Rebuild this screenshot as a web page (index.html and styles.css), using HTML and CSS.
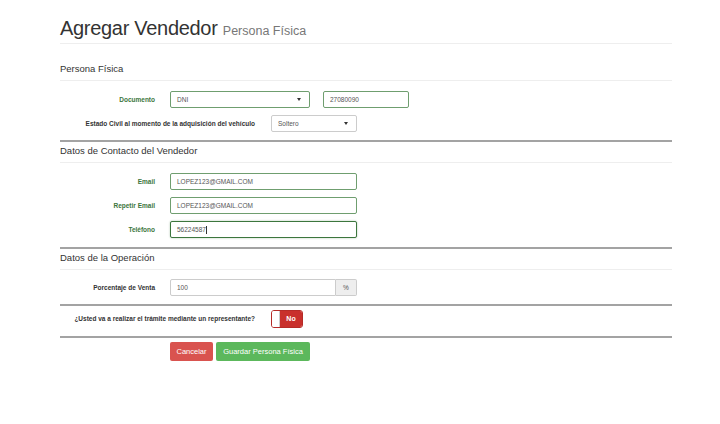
FILE: index.html
```html
<!DOCTYPE html>
<html lang="es">
<head>
<meta charset="utf-8">
<title>Agregar Vendedor</title>
<link rel="stylesheet" href="styles.css">
</head>
<body>
<div class="page">
  <div class="page-header">
    <h1>Agregar Vendedor <small>Persona Física</small></h1>
  </div>

  <section class="section first">
    <h2>Persona Física</h2>
    <div class="rows">
      <div class="row">
        <label class="lbl ok col-lbl">Documento</label>
        <div class="ctrl ok select w140">DNI</div>
        <div class="ctrl ok w86 ml13">27080090</div>
      </div>
      <div class="row">
        <label class="lbl col-lbl-wide">Estado Civil al momento de la adquisición del vehículo</label>
        <div class="ctrl select w86">Soltero</div>
      </div>
    </div>
  </section>

  <section class="section contact">
    <h2>Datos de Contacto del Vendedor</h2>
    <div class="rows">
      <div class="row">
        <label class="lbl ok col-lbl">Email</label>
        <div class="ctrl ok w187">LOPEZ123@GMAIL.COM</div>
      </div>
      <div class="row">
        <label class="lbl ok col-lbl">Repetir Email</label>
        <div class="ctrl ok w187">LOPEZ123@GMAIL.COM</div>
      </div>
      <div class="row">
        <label class="lbl ok col-lbl">Teléfono</label>
        <div class="ctrl focus w187">56224587<span class="caret"></span></div>
      </div>
    </div>
  </section>

  <section class="section operation">
    <h2>Datos de la Operación</h2>
    <div class="rows">
      <div class="row">
        <label class="lbl col-lbl">Porcentaje de Venta</label>
        <div class="group w187">
          <div class="ctrl grow">100</div>
          <div class="addon">%</div>
        </div>
      </div>
    </div>
  </section>

  <section class="section question">
    <div class="row">
      <label class="lbl col-lbl-wide">¿Usted va a realizar el trámite mediante un representante?</label>
      <div class="toggle"><span class="knob"></span><span class="off">No</span></div>
    </div>
  </section>

  <section class="section actions">
    <div class="btns">
      <button class="btn danger w43">Cancelar</button>
      <button class="btn success w94">Guardar Persona Física</button>
    </div>
  </section>
</div>
</body>
</html>
```

FILE: styles.css
```css
* { box-sizing: border-box; }

body {
  margin: 0;
  background: #fff;
  color: #333;
  font-family: "Liberation Sans", Arial, sans-serif;
}

.page {
  width: 612px;
  margin-left: 60px;
}

.page-header {
  padding-top: 16px;
  padding-bottom: 3px;
  border-bottom: 1px solid #eee;
}

h1 {
  margin: 0;
  height: 24px;
  font-size: 20px;
  line-height: 24px;
  font-weight: normal;
  letter-spacing: -0.3px;
  color: #333;
}

h1 small {
  font-size: 12.5px;
  line-height: 1;
  color: #777;
  letter-spacing: 0;
}

h2 {
  margin: 2px 0 0;
  padding-bottom: 4px;
  font-size: 9.5px;
  line-height: 14px;
  font-weight: normal;
  color: #333;
  border-bottom: 1px solid #eee;
}

.section.first h2 { margin-top: 18px; }

.section + .section { border-top: 2px solid #a3a3a3; }

.rows {
  display: flex;
  flex-direction: column;
  gap: 7px;
  padding-top: 10px;
  padding-bottom: 8px;
}

.contact .rows { padding-bottom: 9px; }
.operation .rows { padding-top: 9px; padding-bottom: 8px; }

.question { padding: 4px 0 9px; }
.actions { padding-top: 4px; }

.row {
  display: flex;
  align-items: center;
  height: 17px;
}

.lbl {
  flex: none;
  font-size: 6.5px;
  font-weight: bold;
  text-align: right;
  color: #333;
}

.lbl.ok { color: #3c763d; }

.col-lbl { width: 95px; margin-right: 15px; }
.col-lbl-wide { width: 195px; margin-right: 16px; }

.ctrl {
  flex: none;
  height: 17px;
  display: flex;
  align-items: center;
  padding: 0 6px;
  border: 1px solid #ccc;
  border-radius: 2px;
  background: #fff;
  font-size: 6.5px;
  color: #555;
}

.ctrl.ok { border-color: #6f9e6f; }
.ctrl.focus {
  border-color: #3c763d;
  box-shadow: 0 0 2px rgba(60, 118, 61, 0.45);
}

.select { position: relative; }
.select::after {
  content: "";
  position: absolute;
  right: 8px;
  top: 6px;
  border-left: 2px solid transparent;
  border-right: 2px solid transparent;
  border-top: 3px solid #333;
}

.caret {
  display: inline-block;
  width: 1px;
  height: 8px;
  margin-left: 0.5px;
  background: #333;
}

.w43 { width: 43px; }
.w86 { width: 86px; }
.w94 { width: 94px; }
.w140 { width: 140px; }
.w187 { width: 187px; }
.ml13 { margin-left: 13px; }

.group { display: flex; flex: none; }
.group .grow { flex: 1; border-radius: 2px 0 0 2px; }

.addon {
  width: 21px;
  height: 17px;
  display: flex;
  align-items: center;
  justify-content: center;
  border: 1px solid #ccc;
  border-left: none;
  border-radius: 0 2px 2px 0;
  background: #eee;
  color: #555;
  font-size: 6.5px;
}

.toggle {
  display: flex;
  width: 32px;
  height: 18px;
  border: 1px solid #b52b27;
  border-radius: 3px;
  overflow: hidden;
}

.knob {
  width: 8px;
  background: #fff;
  border-right: 1px solid #ccc;
}

.off {
  flex: 1;
  display: flex;
  align-items: center;
  justify-content: center;
  background: #c9302c;
  color: #fff;
  font-size: 7px;
  font-weight: bold;
}

.btns {
  display: flex;
  gap: 3px;
  padding-left: 110px;
}

.btn {
  height: 19px;
  display: flex;
  align-items: center;
  justify-content: center;
  padding: 0;
  border: none;
  border-radius: 2px;
  font-family: inherit;
  font-size: 7.5px;
  color: #fff;
}

.danger { background: #d9534f; }
.success { background: #5cb85c; }
```
